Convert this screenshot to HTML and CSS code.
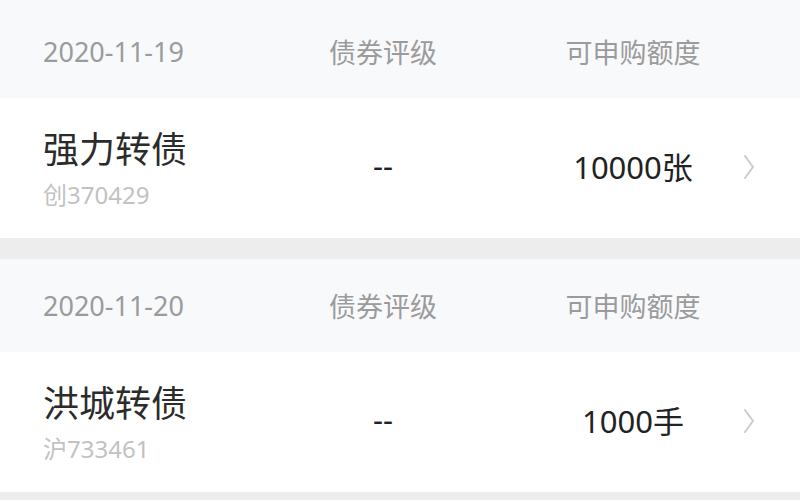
FILE: index.html
```html
<!DOCTYPE html>
<html lang="zh-CN">
<head>
    <meta charset="UTF-8">
    <meta name="viewport" content="width=device-width, initial-scale=1.0">
    <title>可转债申购</title>
    <link rel="stylesheet" href="styles.css">
</head>
<body>

<div class="bond-list">
    <div class="bond-card first">
        <div class="bond-head">
            <span class="date">2020-11-19</span>
            <span class="col-rating">债券评级</span>
            <span class="col-amount">可申购额度</span>
            <span></span>
        </div>
        <div class="bond-row">
            <div class="bond-name">
                <div class="name">强力转债</div>
                <div class="code">创370429</div>
            </div>
            <span class="col-rating value">--</span>
            <span class="col-amount value">10000张</span>
            <svg class="arrow" width="12" height="24" viewBox="0 0 12 24">
                <polyline points="2,1 10,12 2,23" fill="none" stroke="#cbcbcb" stroke-width="2" stroke-linecap="round" stroke-linejoin="round"/>
            </svg>
        </div>
    </div>

    <div class="bond-card">
        <div class="bond-head">
            <span class="date">2020-11-20</span>
            <span class="col-rating">债券评级</span>
            <span class="col-amount">可申购额度</span>
            <span></span>
        </div>
        <div class="bond-row">
            <div class="bond-name">
                <div class="name">洪城转债</div>
                <div class="code">沪733461</div>
            </div>
            <span class="col-rating value">--</span>
            <span class="col-amount value">1000手</span>
            <svg class="arrow" width="12" height="24" viewBox="0 0 12 24">
                <polyline points="2,1 10,12 2,23" fill="none" stroke="#cbcbcb" stroke-width="2" stroke-linecap="round" stroke-linejoin="round"/>
            </svg>
        </div>
    </div>
</div>

</body>
</html>
```

FILE: styles.css
```css
body {
    margin: 0;
    font-family: "Noto Sans", "Noto Sans CJK SC", sans-serif;
    background-color: #ededed;
}
.bond-card {
    margin-bottom: 21px;
    background-color: #fff;
}
.bond-head,
.bond-row {
    display: grid;
    grid-template-columns: 240px 200px 1fr 12px;
    align-items: center;
    padding: 0 45px 0 43px;
}
.bond-head {
    height: 93px;
    background-color: #f8f9fb;
    color: #9b9b9b;
    font-size: 27px;
}
.first .bond-head {
    padding-top: 5px;
}
.bond-row {
    height: 140px;
}
.col-rating {
    text-align: center;
}
.col-amount {
    text-align: center;
    padding-left: 40px;
}
.name {
    font-size: 36px;
    line-height: 46px;
    color: #2b2b2b;
}
.code {
    margin-top: 8px;
    font-size: 24px;
    line-height: 28px;
    color: #c2c2c2;
}
.value {
    font-size: 31px;
    color: #222;
    padding-bottom: 6px;
}
.arrow {
    display: block;
    margin-bottom: 2px;
}
```
